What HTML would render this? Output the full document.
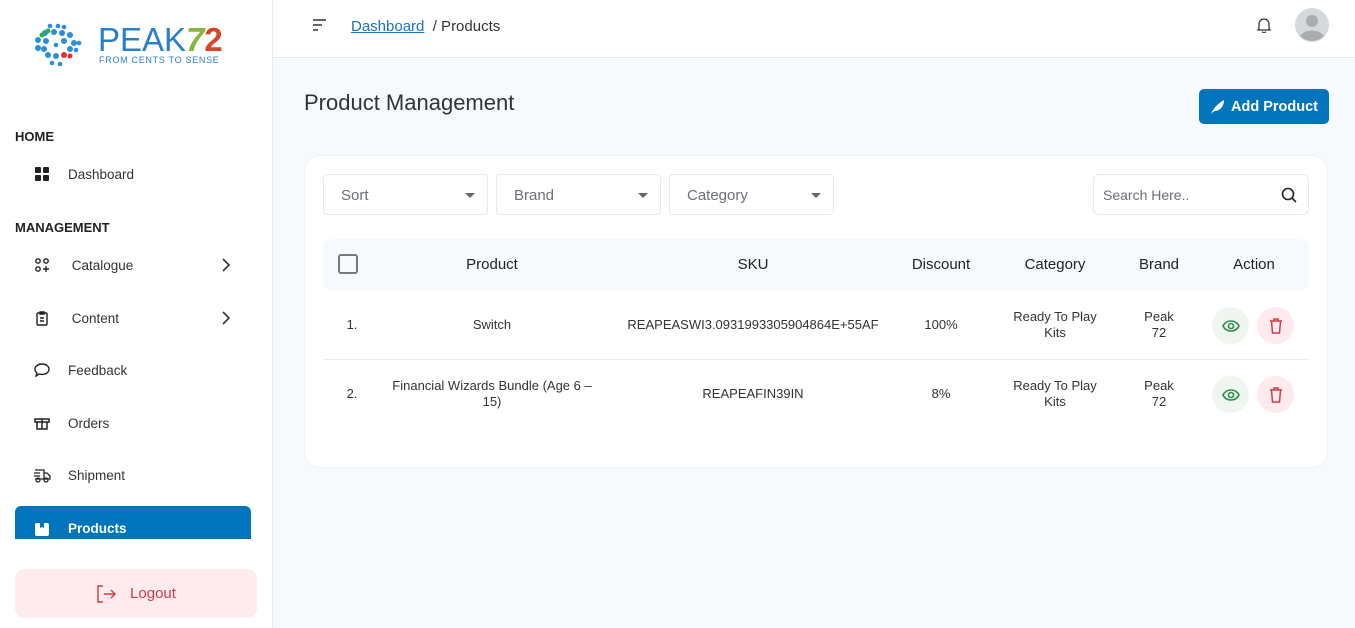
<!DOCTYPE html>
<html><head><meta charset="utf-8"><style>
*{box-sizing:border-box;margin:0;padding:0}
body{width:1355px;height:628px;overflow:hidden;font-family:"Liberation Sans",sans-serif;background:#f7fafd;position:relative;color:#222}
.sb{position:absolute;left:0;top:0;width:273px;height:628px;background:#fff;border-right:1px solid #e6e9ee}
.sec{position:absolute;left:15px;font-size:13px;font-weight:bold;color:#222}
.it{position:absolute;left:15px;width:236px;height:34px;display:flex;align-items:center;font-size:13.5px;color:#333}
.it .ic{width:20px;margin-left:17px;margin-right:16px;display:flex;justify-content:center}
.chev{position:absolute;right:20px;top:9px}
.hdr{position:absolute;left:273px;top:0;right:0;height:58px;background:#fff;border-bottom:1px solid #e4e8ee}
.card{position:absolute;left:304px;top:155px;width:1024px;height:313px;background:#fff;border-radius:16px;border:1px solid #eef1f5}
.sel{position:absolute;top:18px;height:41px;border:1px solid #e6e9ee;border-radius:4px;font-size:15px;color:#6b6f76;padding:12px 17px}
.sel:after{content:"";position:absolute;right:12px;top:18px;border-left:5px solid transparent;border-right:5px solid transparent;border-top:5px solid #666}
.th{position:absolute;left:19px;top:83px;width:986px;height:52px;background:#f6fafd;border-radius:10px}
.c{position:absolute;text-align:center;transform:translateX(-50%);font-size:13px;color:#333;line-height:16px}
.hc{font-size:15px;color:#222;top:18px}
.btn{position:absolute;width:37px;height:37px;border-radius:50%;display:flex;align-items:center;justify-content:center}
</style></head><body>
<div class="sb">
 <svg style="position:absolute;left:34px;top:23px" width="48" height="45" viewBox="0 0 48 45">
  <g fill="#2a8fd8"><circle cx="16" cy="3" r="2.3"/><circle cx="24" cy="3" r="2.3"/><circle cx="30" cy="4" r="2.3"/><circle cx="11" cy="10" r="3"/><circle cx="20" cy="9" r="3"/><circle cx="28" cy="10" r="3"/><circle cx="36" cy="12" r="3"/><circle cx="4" cy="17" r="3"/><circle cx="12" cy="18" r="3"/><circle cx="30" cy="18" r="3"/><circle cx="40" cy="20" r="3"/><circle cx="45" cy="20" r="2.3"/><circle cx="4" cy="25" r="3"/><circle cx="10" cy="26" r="3"/><circle cx="36" cy="26" r="3"/><circle cx="42" cy="27" r="2.3"/><circle cx="14" cy="32" r="3"/><circle cx="22" cy="33" r="3"/><circle cx="18" cy="40" r="2.3"/><circle cx="26" cy="41" r="2.3"/><circle cx="22" cy="22" r="2.3"/></g>
  <g fill="#2ab33a"><circle cx="8" cy="12" r="2.5"/><circle cx="14" cy="8" r="2.5"/></g>
  <g fill="#e53030"><circle cx="30" cy="32" r="3"/><circle cx="36" cy="33" r="2.5"/></g>
 </svg>
 <div style="position:absolute;left:98px;top:23px;font-size:33px;color:#2a7fc9;letter-spacing:0px;line-height:34px">PEAK<span style="color:#8ab53a;font-weight:bold;font-style:italic">7</span><span style="color:#d9452c;font-weight:bold">2</span></div>
 <div style="position:absolute;left:99px;top:55px;font-size:9px;color:#2a7fc9;letter-spacing:.7px">FROM CENTS TO SENSE</div>
 <div class="sec" style="top:129px">HOME</div>
 <div class="it" style="top:157px"><span class="ic"><svg width="14" height="14"><rect x="0" y="0" width="6" height="6" rx="1" fill="#222"/><rect x="8" y="0" width="6" height="6" rx="1" fill="#222"/><rect x="0" y="8" width="6" height="6" rx="1" fill="#222"/><rect x="8" y="8" width="6" height="6" rx="1" fill="#222"/></svg></span>Dashboard</div>
 <div class="sec" style="top:220px">MANAGEMENT</div>
 <div class="it" style="top:248px"><span class="ic"><svg width="14" height="14" fill="none" stroke="#222" stroke-width="1.4"><circle cx="3" cy="3" r="2.2"/><circle cx="11" cy="3" r="2.2"/><circle cx="3" cy="11" r="2.2"/><path d="M11 8v6M8 11h6"/></svg></span>&nbsp;Catalogue<svg class="chev" width="10" height="16" fill="none" stroke="#333" stroke-width="1.6"><path d="M2 2l6 6-6 6"/></svg></div>
 <div class="it" style="top:301px"><span class="ic"><svg width="12" height="15" fill="none" stroke="#222" stroke-width="1.4"><rect x="1" y="2" width="10" height="12" rx="1"/><path d="M4 1h4v2H4zM4 7h4M4 10h4"/></svg></span>&nbsp;Content<svg class="chev" width="10" height="16" fill="none" stroke="#333" stroke-width="1.6"><path d="M2 2l6 6-6 6"/></svg></div>
 <div class="it" style="top:353px"><span class="ic"><svg width="16" height="14" fill="none" stroke="#222" stroke-width="1.4"><path d="M8 1c4 0 7 2.3 7 5.2S12 11.4 8 11.4c-1 0-2-.1-2.8-.4L2 13l1-3C1.8 9 1 7.7 1 6.2 1 3.3 4 1 8 1z"/></svg></span>Feedback</div>
 <div class="it" style="top:406px"><span class="ic"><svg width="16" height="13" fill="none" stroke="#222" stroke-width="1.5"><path d="M1 2h14v3H1zM3 5v7h10V5M8 2v10"/></svg></span>Orders</div>
 <div class="it" style="top:458px"><span class="ic"><svg width="18" height="15" fill="none" stroke="#222" stroke-width="1.3"><path d="M2 2h9v9H2M11 5h3l3 3v3h-6M1 5h6M1 8h6"/><circle cx="5" cy="12" r="2"/><circle cx="13" cy="12" r="2"/></svg></span>Shipment</div>
 <div class="it" style="top:506px;height:33px;background:#0075bb;border-radius:6px 6px 0 0;color:#fff;font-weight:bold;align-items:flex-end;padding-bottom:3px"><span class="ic"><svg width="14" height="14"><rect x="0" y="1" width="14" height="13" rx="2" fill="#fff"/><path d="M5 1v5l2-1 2 1V1" fill="#0075bb"/></svg></span>Products</div>
 <div style="position:absolute;left:15px;top:569px;width:242px;height:49px;background:#fdebed;border-radius:10px;display:flex;align-items:center;justify-content:center;color:#d13a48;font-size:15px"><svg width="20" height="18" fill="none" stroke="#d13a48" stroke-width="1.4" style="margin-right:14px"><path d="M7 1H2v16h5M8 9h11M15 5l4 4-4 4"/></svg>Logout</div>
</div>
<div class="hdr">
 <svg style="position:absolute;left:40px;top:19px" width="14" height="12" stroke="#333" stroke-width="1.5"><path d="M0 1h13M0 6h9M0 11h5"/></svg>
 <div style="position:absolute;left:78px;top:18px;font-size:15px;color:#333"><span style="color:#1a73c9;text-decoration:underline">Dashboard</span>&nbsp; / Products</div>
 <svg style="position:absolute;left:984px;top:17px" width="14" height="16" fill="none" stroke="#333" stroke-width="1.3"><path d="M2 12V7a5 5 0 0110 0v5l1 1H1zM5.5 14.5a1.5 1.5 0 003 0"/></svg>
 <svg style="position:absolute;left:1022px;top:8px" width="34" height="34"><circle cx="17" cy="17" r="17" fill="#d6d9dc"/><circle cx="17" cy="13" r="6" fill="#a9adb1"/><path d="M5 28a13 9 0 0124 0 17 17 0 01-24 0z" fill="#a9adb1"/></svg>
</div>
<div style="position:absolute;left:304px;top:90px;font-size:22px;color:#333">Product Management</div>
<div style="position:absolute;left:1199px;top:89px;width:130px;height:35px;background:#0075bb;border-radius:5px;color:#fff;font-weight:bold;font-size:14.5px;display:flex;align-items:center;padding-left:10px"><svg width="16" height="16" style="margin-right:6px"><path d="M2 15C4 10 8 5 15 1c0 6-4 11-9 11l-2 1z" fill="#fff"/></svg>Add Product</div>
<div class="card">
 <div class="sel" style="left:18px;width:165px">Sort</div>
 <div class="sel" style="left:191px;width:165px">Brand</div>
 <div class="sel" style="left:364px;width:165px">Category</div>
 <div style="position:absolute;left:788px;top:18px;width:216px;height:41px;border:1px solid #e6e9ee;border-radius:6px;font-size:14px;color:#6b6f76;padding:12px 9px">Search Here..<svg style="position:absolute;right:11px;top:12px" width="16" height="16" fill="none" stroke="#222" stroke-width="1.6"><circle cx="7" cy="7" r="5.5"/><path d="M11 11l4 4"/></svg></div>
 <div class="th" style="left:18px">
  <div style="position:absolute;left:15px;top:15px;width:20px;height:20px;border:2px solid #777;border-radius:3px"></div>
  <div class="c hc" style="left:169px">Product</div>
  <div class="c hc" style="left:430px">SKU</div>
  <div class="c hc" style="left:618px">Discount</div>
  <div class="c hc" style="left:732px">Category</div>
  <div class="c hc" style="left:836px">Brand</div>
  <div class="c hc" style="left:931px">Action</div>
 </div>
 <div class="c" style="left:47px;top:161px">1.</div>
 <div class="c" style="left:187px;top:161px">Switch</div>
 <div class="c" style="left:448px;top:161px;white-space:nowrap">REAPEASWI3.0931993305904864E+55AF</div>
 <div class="c" style="left:636px;top:161px">100%</div>
 <div class="c" style="left:750px;top:153px;white-space:nowrap">Ready To Play<br>Kits</div>
 <div class="c" style="left:854px;top:153px">Peak<br>72</div>
 <div style="position:absolute;left:19px;top:203px;width:986px;height:1px;background:#eceff2"></div>
 <div class="c" style="left:47px;top:230px">2.</div>
 <div class="c" style="left:187px;top:222px;width:210px">Financial Wizards Bundle (Age 6 – 15)</div>
 <div class="c" style="left:448px;top:230px">REAPEAFIN39IN</div>
 <div class="c" style="left:636px;top:230px">8%</div>
 <div class="c" style="left:750px;top:222px;white-space:nowrap">Ready To Play<br>Kits</div>
 <div class="c" style="left:854px;top:222px">Peak<br>72</div>
 <div class="btn" style="left:907px;top:151px;background:#eef6ef"><svg width="18" height="12" fill="none" stroke="#2e8b4a" stroke-width="1.6"><path d="M1 6c2-4 5-5 8-5s6 1 8 5c-2 4-5 5-8 5S3 10 1 6z"/><circle cx="9" cy="6" r="2.5"/></svg></div>
 <div class="btn" style="left:952px;top:151px;background:#fdebed"><svg width="14" height="16" fill="none" stroke="#d13a48" stroke-width="1.5"><path d="M1 3h12M5 3V1h4v2M2.5 3l1 12h7l1-12"/></svg></div>
 <div class="btn" style="left:907px;top:220px;background:#eef6ef"><svg width="18" height="12" fill="none" stroke="#2e8b4a" stroke-width="1.6"><path d="M1 6c2-4 5-5 8-5s6 1 8 5c-2 4-5 5-8 5S3 10 1 6z"/><circle cx="9" cy="6" r="2.5"/></svg></div>
 <div class="btn" style="left:952px;top:220px;background:#fdebed"><svg width="14" height="16" fill="none" stroke="#d13a48" stroke-width="1.5"><path d="M1 3h12M5 3V1h4v2M2.5 3l1 12h7l1-12"/></svg></div>
</div>
</body></html>
